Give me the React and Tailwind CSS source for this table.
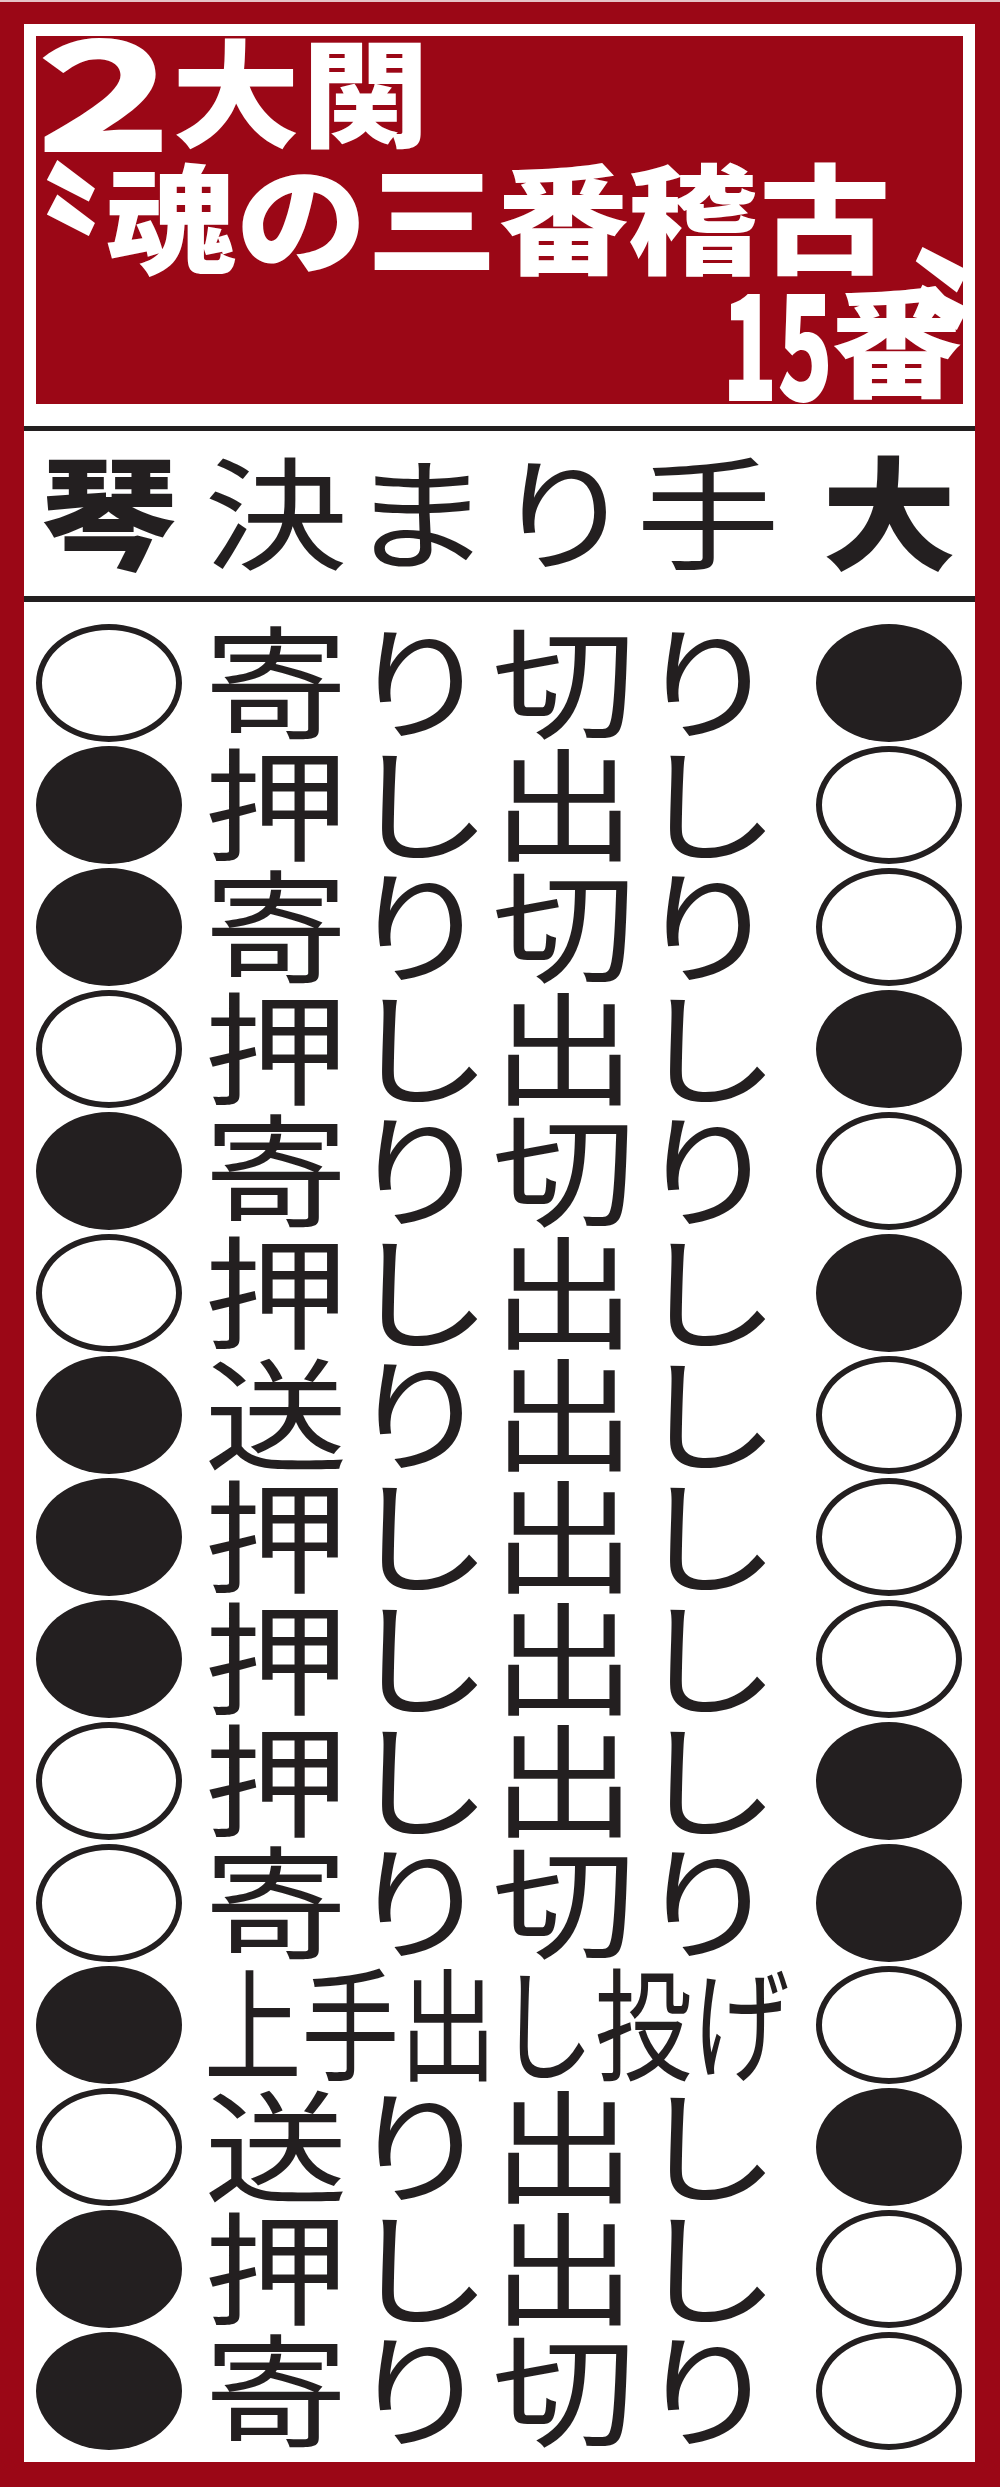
const rows = [
  { l: false, t: "寄り切り", r: true },
  { l: true, t: "押し出し", r: false },
  { l: true, t: "寄り切り", r: false },
  { l: false, t: "押し出し", r: true },
  { l: true, t: "寄り切り", r: false },
  { l: false, t: "押し出し", r: true },
  { l: true, t: "送り出し", r: false },
  { l: true, t: "押し出し", r: false },
  { l: true, t: "押し出し", r: false },
  { l: false, t: "押し出し", r: true },
  { l: false, t: "寄り切り", r: true },
  { l: true, t: "上手出し投げ", r: false },
  { l: false, t: "送り出し", r: true },
  { l: true, t: "押し出し", r: false },
  { l: true, t: "寄り切り", r: false },
];

function Mark({ filled }) {
  return filled ? (
    <div className="w-[146px] h-[118px] shrink-0 rounded-[50%] bg-[#231f20]" />
  ) : (
    <div className="w-[146px] h-[118px] shrink-0 rounded-[50%] border-[6px] border-[#231f20] bg-white" />
  );
}

export default function App() {
  return (
    <div className="w-[1000px] h-[2487px] bg-[#9b0716] border-t-2 border-[#e6c3c7] pt-[22px] pl-[24px] pr-[25px] pb-[25px] font-['Noto_Sans_CJK_JP',sans-serif]">
      <div className="w-[951px] h-[2438px] bg-white flex flex-col">
        {/* title panel */}
        <div className="mx-[12px] mt-[12px] h-[368px] shrink-0 bg-[#9b0716] text-white font-black flex flex-col overflow-hidden">
          <div className="h-[123px] shrink-0 flex items-center pl-[0px] pb-[22px] leading-none whitespace-nowrap">
            <span className="inline-block shrink-0 scale-x-[1.35] text-[150px] ml-[-8px]">２</span>
            <span className="inline-block shrink-0 origin-left scale-x-[1.1] text-[116px] tracking-[2px] ml-[-6px]">大関</span>
          </div>
          <div className="h-[123px] shrink-0 flex items-center pl-[69px] pb-[14px] leading-none whitespace-nowrap">
            <span className="w-0 h-0 shrink-0 self-start overflow-visible">
              <span className="inline-block text-[165px] leading-none ml-[-167px] mt-[-11px]">〝</span>
            </span>
            <span className="inline-block shrink-0 origin-left scale-x-[1.1] text-[119px]">魂の三番稽古</span>
            <span className="w-0 h-0 shrink-0 self-start overflow-visible">
              <span className="inline-block text-[180px] leading-none ml-[88px] mt-[-16px]">〟</span>
            </span>
          </div>
          <div className="h-[122px] shrink-0 flex items-center justify-end pr-[1px] pb-[14px] leading-none whitespace-nowrap">
            <span className="inline-block shrink-0 origin-right scale-x-[0.62] text-[147px] mr-[10px]">15</span>
            <span className="inline-block shrink-0 origin-right scale-x-[1.1] text-[119px]">番</span>
          </div>
        </div>
        <div className="h-[22px] shrink-0" />
        <div className="h-[5px] bg-[#231f20] shrink-0" />
        {/* header row */}
        <div className="h-[165px] shrink-0 flex items-center pl-[12px] text-[#231f20]">
          <div className="w-[146px] shrink-0 flex justify-center pb-[14px]">
            <span className="inline-block scale-x-[1.1] text-[122px] leading-none font-black">琴</span>
          </div>
          <div className="ml-[22px] w-[582px] shrink-0 pb-[14px]">
            <span className="inline-block origin-left scale-x-[1.18] text-[122px] leading-none whitespace-nowrap">決まり手</span>
          </div>
          <div className="ml-[30px] w-[146px] shrink-0 flex justify-center pb-[14px]">
            <span className="inline-block scale-x-[1.1] text-[122px] leading-none font-black">大</span>
          </div>
        </div>
        <div className="h-[6px] bg-[#231f20] shrink-0" />
        {/* rows */}
        <div className="pt-[20px] flex flex-col">
          {rows.map((r, i) => (
            <div key={i} className="h-[122px] flex items-center pl-[12px] text-[#231f20]">
              <Mark filled={r.l} />
              <div className="ml-[22px] w-[582px] shrink-0 pb-[14px]">
                <span
                  className={
                    r.t.length > 4
                      ? "inline-block origin-left scale-x-[0.8] text-[122px] leading-none whitespace-nowrap"
                      : "inline-block origin-left scale-x-[1.18] text-[122px] leading-none whitespace-nowrap"
                  }
                >
                  {r.t}
                </span>
              </div>
              <div className="ml-[30px]">
                <Mark filled={r.r} />
              </div>
            </div>
          ))}
        </div>
      </div>
    </div>
  );
}
